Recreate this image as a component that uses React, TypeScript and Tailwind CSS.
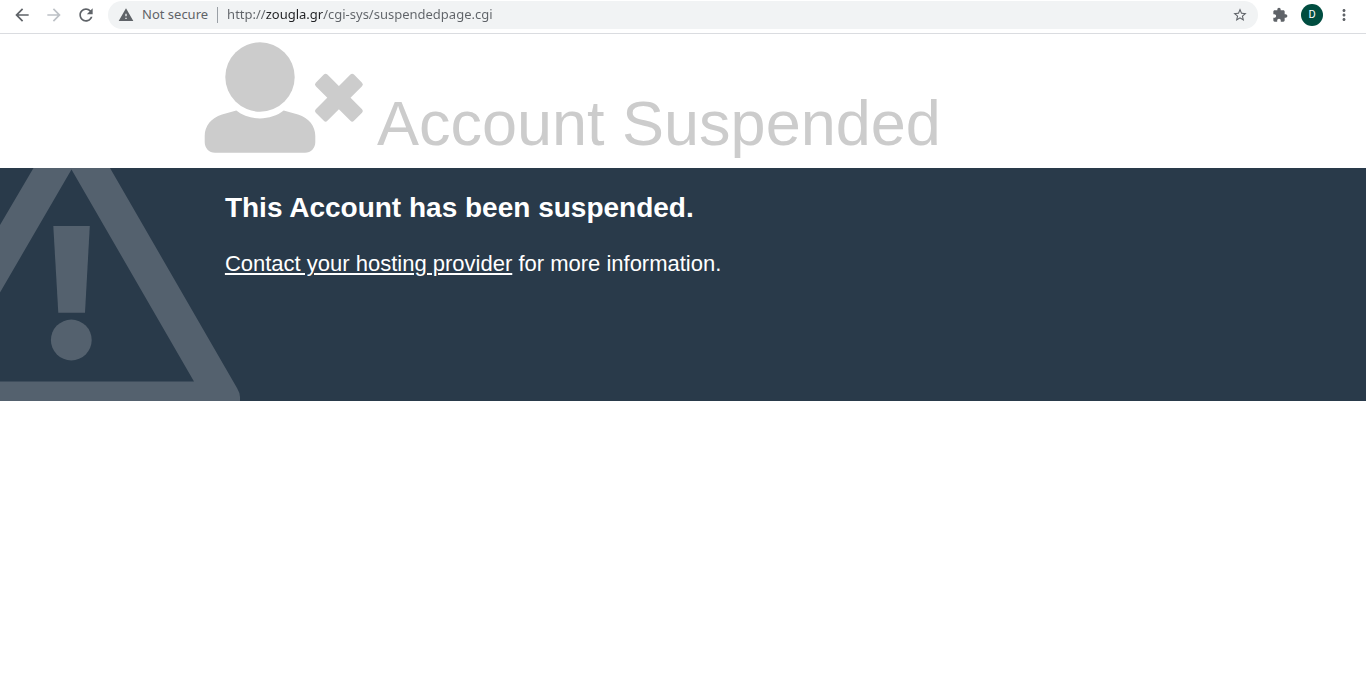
import React, { useState } from 'react';

interface IconButtonProps {
  label: string;
  path: string;
  size?: string;
  className?: string;
}

const ICONS = {
  back: 'M20 11H7.83l5.59-5.59L12 4l-8 8 8 8 1.41-1.41L7.83 13H20v-2z',
  forward: 'M12 4l-1.41 1.41L16.17 11H4v2h12.17l-5.58 5.59L12 20l8-8z',
  reload:
    'M17.65 6.35C16.2 4.9 14.21 4 12 4c-4.42 0-7.99 3.58-7.99 8s3.57 8 7.99 8c3.73 0 6.84-2.55 7.73-6h-2.08c-.82 2.33-3.04 4-5.65 4-3.31 0-6-2.69-6-6s2.69-6 6-6c1.66 0 3.14.69 4.22 1.78L13 11h7V4l-2.35 2.35z',
  star: 'M22 9.24l-7.19-.62L12 2 9.19 8.63 2 9.24l5.46 4.73L5.82 21 12 17.27 18.18 21l-1.63-7.03L22 9.24zM12 15.4l-3.76 2.27 1-4.28-3.32-2.88 4.38-.38L12 6.1l1.71 4.04 4.38.38-3.32 2.88 1 4.28L12 15.4z',
  puzzle:
    'M20.5 11H19V7c0-1.1-.9-2-2-2h-4V3.5C13 2.12 11.88 1 10.5 1S8 2.12 8 3.5V5H4c-1.1 0-1.99.9-1.99 2v3.8H3.5c1.49 0 2.7 1.21 2.7 2.7s-1.21 2.7-2.7 2.7H2V20c0 1.1.9 2 2 2h3.8v-1.5c0-1.49 1.21-2.7 2.7-2.7 1.49 0 2.7 1.21 2.7 2.7V22H17c1.1 0 2-.9 2-2v-4h1.5c1.38 0 2.5-1.12 2.5-2.5S21.88 11 20.5 11z',
  more: 'M12 8c1.1 0 2-.9 2-2s-.9-2-2-2-2 .9-2 2 .9 2 2 2zm0 2c-1.1 0-2 .9-2 2s.9 2 2 2 2-.9 2-2-.9-2-2-2zm0 6c-1.1 0-2 .9-2 2s.9 2 2 2 2-.9 2-2-.9-2-2-2z',
};

const IconButton: React.FC<IconButtonProps> = ({ label, path, size = 'size-5', className = 'text-[#5f6368]' }) => (
  <button type="button" aria-label={label} className={`flex size-6 shrink-0 items-center justify-center ${className}`}>
    <svg viewBox="0 0 24 24" className={size} fill="currentColor" aria-hidden="true">
      <path d={path} />
    </svg>
  </button>
);

const Toolbar: React.FC = () => {
  const [url, setUrl] = useState('http://zougla.gr/cgi-sys/suspendedpage.cgi');

  return (
    <div className="flex items-start border-b border-[#dadce0] pt-px pb-1 font-['Noto_Sans',sans-serif]">
      <nav className="flex h-7 items-center gap-2 pr-2.5 pl-2.5">
        <IconButton label="Back" path={ICONS.back} />
        <IconButton label="Forward" path={ICONS.forward} className="text-[#bdc1c6]" />
        <IconButton label="Reload" path={ICONS.reload} />
      </nav>

      {/* Address bar */}
      <div className="flex h-7 min-w-0 flex-1 items-center rounded-full bg-[#f1f3f4] pr-1.5 pl-2.5 text-[13px] text-[#5f6368]">
        <svg viewBox="0 0 24 24" className="size-4 shrink-0" fill="currentColor" aria-hidden="true">
          <path d="M1 21h22L12 2 1 21zm12-3h-2v-2h2v2zm0-4h-2v-4h2v4z" />
        </svg>
        <span className="ml-2 whitespace-nowrap">Not secure</span>
        <span className="mx-[9px] h-4 w-px bg-[#9aa0a6]" />
        <input
          type="text"
          aria-label="Address"
          value={url}
          onChange={(e) => setUrl(e.target.value)}
          className="min-w-0 flex-1 bg-[linear-gradient(to_right,#5f6368_39px,#202124_39px,#202124_97px,#5f6368_97px)] bg-clip-text text-transparent caret-[#202124] outline-none"
        />
        <IconButton label="Bookmark this page" path={ICONS.star} size="size-4" />
      </div>

      <div className="flex h-7 items-center gap-2 pr-2.5 pl-2.5">
        <IconButton label="Extensions" path={ICONS.puzzle} size="size-4" />
        <button
          type="button"
          aria-label="Profile"
          className="flex size-6 items-center justify-center"
        >
          <span className="flex size-[22px] items-center justify-center rounded-full bg-[#004d40] font-[Roboto] text-[11px] text-white">D</span>
        </button>
        <IconButton label="Menu" path={ICONS.more} size="size-[18px]" />
      </div>
    </div>
  );
};

const SuspendedUserIcon: React.FC = () => (
  <svg viewBox="1 0 160 112" className="h-28 w-40 shrink-0 overflow-visible" fill="currentColor" aria-hidden="true">
    <circle cx="56" cy="35" r="34.7" />
    <path d="M32.3 68.6C45 79 67 79 79.7 68.6L94 72.5C105 76 111.3 84 111.3 94V100C111.3 106 107 110.8 101 110.8H11C5 110.8.7 106 .7 100V94C.7 84 7 76 18 72.5Z" />
    <g transform="translate(134.9 55.7)">
      <rect x="-27" y="-8.2" width="54" height="16.4" rx="2.5" transform="rotate(45)" />
      <rect x="-27" y="-8.2" width="54" height="16.4" rx="2.5" transform="rotate(-45)" />
    </g>
  </svg>
);

const WarningIcon: React.FC = () => (
  <svg
    viewBox="0 0 240 233"
    className="absolute bottom-0 left-0 h-[233px] w-60 text-[#54616e]"
    fill="currentColor"
    aria-hidden="true"
  >
    <path
      fillRule="evenodd"
      d="M33.5 0H110L237 220Q240 225 240 229V233H0V213.5H194L71.5 1.5 0 124.5V57Z"
    />
    <path d="M53.3 58H89.8L85 144.7H58.3Z" />
    <circle cx="71.3" cy="172" r="20.4" />
  </svg>
);

const App: React.FC = () => {
  return (
    <div className="min-h-screen bg-white font-['Liberation_Sans',Arial,sans-serif]">
      <Toolbar />

      <header className="flex items-start gap-3 px-[15%] pt-2 pb-3 text-[#cccccc]">
        <SuspendedUserIcon />
        <h1 className="pt-12 text-[63px] leading-[66px] whitespace-nowrap">Account Suspended</h1>
      </header>

      <main className="relative min-h-[233px] bg-[#293a4a] px-[15%] text-white">
        <WarningIcon />
        <div className="relative pt-5 pl-5">
          <h2 className="text-[28px] leading-10 font-bold">This Account has been suspended.</h2>
          <p className="mt-5 text-[22px] leading-8">
            <a href="#contact" className="underline">Contact your hosting provider</a> for more information.
          </p>
        </div>
      </main>
    </div>
  );
};

export default App;
